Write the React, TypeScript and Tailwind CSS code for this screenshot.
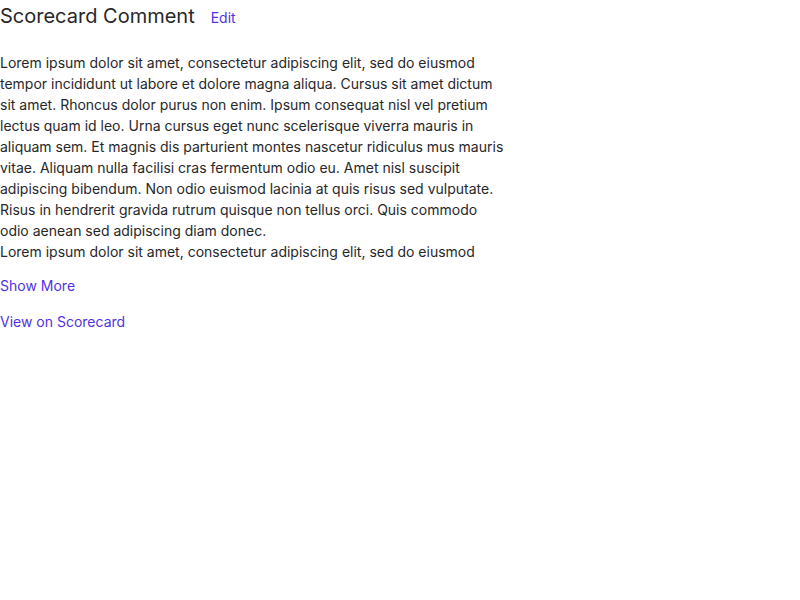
import React from "react";

const body =
  "Lorem ipsum dolor sit amet, consectetur adipiscing elit, sed do eiusmod tempor incididunt ut labore et dolore magna aliqua. Cursus sit amet dictum sit amet. Rhoncus dolor purus non enim. Ipsum consequat nisl vel pretium lectus quam id leo. Urna cursus eget nunc scelerisque viverra mauris in aliquam sem. Et magnis dis parturient montes nascetur ridiculus mus mauris vitae. Aliquam nulla facilisi cras fermentum odio eu. Amet nisl suscipit adipiscing bibendum. Non odio euismod lacinia at quis risus sed vulputate. Risus in hendrerit gravida rutrum quisque non tellus orci. Quis commodo odio aenean sed adipiscing diam donec.";

const tail = "Lorem ipsum dolor sit amet, consectetur adipiscing elit, sed do eiusmod";

export default function App() {
  return (
    <div className="min-h-screen bg-white text-[#27272a] font-[Inter]">
      <div className="flex items-baseline gap-4">
        <h2 className="text-xl leading-8 text-[#27272a]">Scorecard Comment</h2>
        <button className="text-sm text-[#5232e0]">Edit</button>
      </div>

      {/* clamped comment body */}
      <div className="mt-5 w-[508px] h-[210px] overflow-hidden text-sm leading-[21px]">
        <p>{body}</p>
        <p>{tail}</p>
      </div>

      <button className="mt-[14px] block text-sm leading-5 text-[#5232e0]">Show More</button>
      <button className="mt-4 block text-sm leading-5 text-[#5232e0]">View on Scorecard</button>
    </div>
  );
}
